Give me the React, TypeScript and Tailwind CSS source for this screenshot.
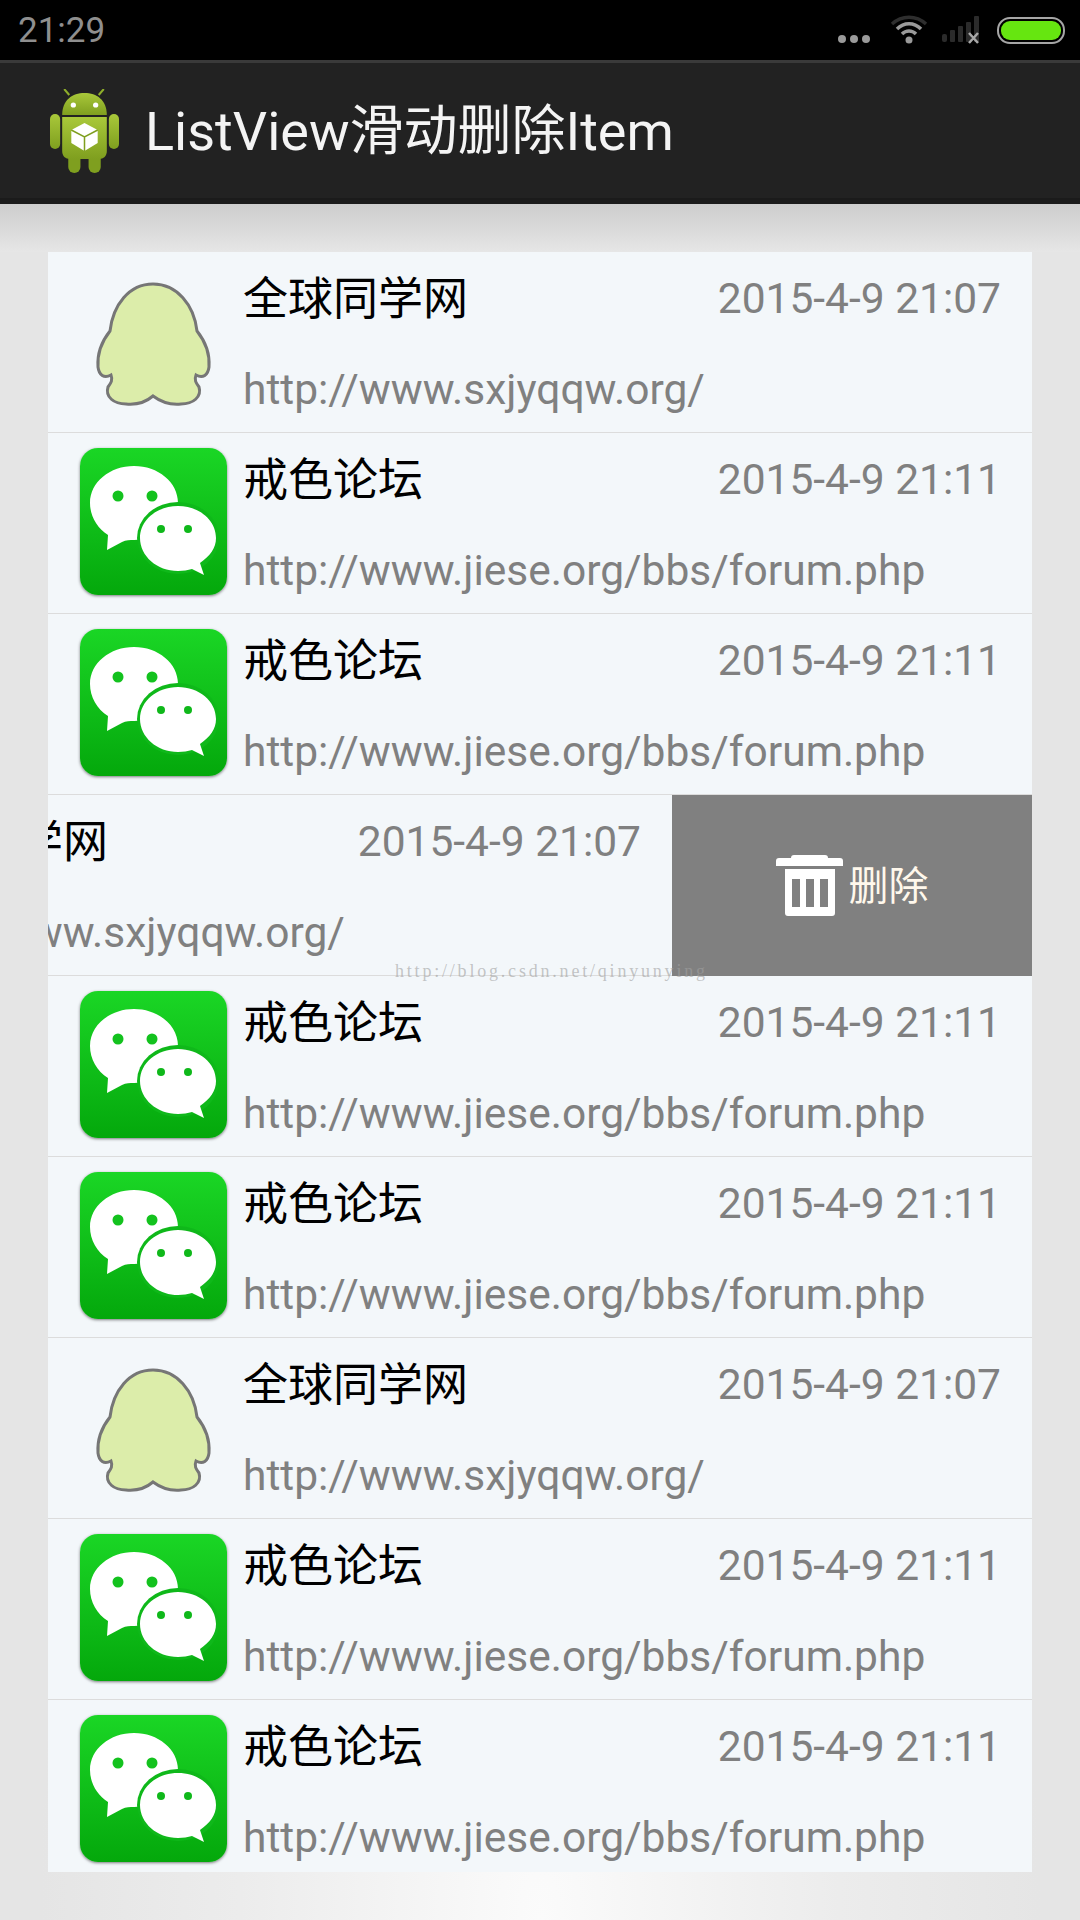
const SANS = "font-['Roboto','Noto_Sans_CJK_SC',sans-serif]";

type Item = { kind: "qq" | "wx"; title: string; date: string; url: string };

const QQ: Item = { kind: "qq", title: "全球同学网", date: "2015-4-9 21:07", url: "http://www.sxjyqqw.org/" };
const WX: Item = { kind: "wx", title: "戒色论坛", date: "2015-4-9 21:11", url: "http://www.jiese.org/bbs/forum.php" };

const items: Item[] = [QQ, WX, WX, QQ, WX, WX, QQ, WX, WX];

function StatusIcons() {
  return (
    <div className="flex items-center">
      <svg width="36" height="10" viewBox="0 0 36 10" className="mt-[18px]">
        <circle cx="4" cy="5" r="4" fill="#9a9a9a" />
        <circle cx="16" cy="5" r="4" fill="#9a9a9a" />
        <circle cx="28" cy="5" r="4" fill="#9a9a9a" />
      </svg>
      <svg width="38" height="30" viewBox="0 0 38 30" className="ml-[16px] mb-[1px]">
        <path d="M2 9 C12 0 26 0 36 9" fill="none" stroke="#2e2e2e" strokeWidth="3.5" />
        <path d="M7 14 C14 7 24 7 31 14" fill="none" stroke="#9a9a9a" strokeWidth="3.5" />
        <path d="M12 19 C16 15 22 15 26 19" fill="none" stroke="#9a9a9a" strokeWidth="3.5" />
        <circle cx="19" cy="25" r="3.5" fill="#9a9a9a" />
      </svg>
      <svg width="40" height="28" viewBox="0 0 40 28" className="ml-[14px]">
        <rect x="0" y="18" width="5" height="8" rx="2" fill="#2b2b2b" />
        <rect x="8" y="14" width="5" height="12" rx="1" fill="#2b2b2b" />
        <rect x="16" y="10" width="5" height="16" rx="1" fill="#2b2b2b" />
        <rect x="24" y="6" width="5" height="20" rx="1" fill="#2b2b2b" />
        <rect x="32" y="0" width="5" height="26" rx="1" fill="#2b2b2b" />
        <path d="M27 17 L36 27 M36 17 L27 27" stroke="#a8a8a8" strokeWidth="2.5" />
      </svg>
      <div className="ml-[15px] h-[27px] w-[68px] rounded-[13px] border-[2px] border-[#a6a6a6] bg-black p-[2px]">
        <div className="h-full w-full rounded-[9px] bg-[#66e610]" />
      </div>
    </div>
  );
}

function AndroidIcon() {
  return (
    <svg width="69" height="84" viewBox="0 0 68 84" preserveAspectRatio="none">
      <defs>
        <linearGradient id="droid" x1="0" y1="0" x2="0" y2="1">
          <stop offset="0" stopColor="#a9c83a" />
          <stop offset="1" stopColor="#7f9f1f" />
        </linearGradient>
      </defs>
      <path d="M19 6 L14 0 M48 6 L53 0" stroke="#8fae2a" strokeWidth="2" />
      <path d="M12 26 C12 11 22 4 34 4 C46 4 56 11 56 26 Z" fill="url(#droid)" />
      <circle cx="23" cy="16" r="2.6" fill="#fff" />
      <circle cx="45" cy="16" r="2.6" fill="#fff" />
      <rect x="0" y="25" width="10" height="35" rx="5" fill="url(#droid)" />
      <rect x="58" y="25" width="10" height="35" rx="5" fill="url(#droid)" />
      <rect x="18" y="62" width="12" height="22" rx="6" fill="#7f9f1f" />
      <rect x="38" y="62" width="12" height="22" rx="6" fill="#7f9f1f" />
      <path d="M12 28 L56 28 L56 62 C56 67 53 70 48 70 L20 70 C15 70 12 67 12 62 Z" fill="url(#droid)" />
      <path d="M34 34 L47 41 L47 54 L34 62 L21 54 L21 41 Z" fill="#fff" />
      <path d="M21 41 L34 48 L47 41 M34 48 L34 62" fill="none" stroke="#7f9f1f" strokeWidth="1.5" />
    </svg>
  );
}

function QQIcon() {
  return (
    <svg width="147" height="147" viewBox="-16 -16 147 147">
      <path
        d="M57 1 C33 1 17 22 14 48 C6 58 1 70 2 84 C3 92 8 96 15 92 C17 97 15 100 12 104 C9 114 18 121 30 121 C40 122 50 119 57 113 C65 119 75 122 85 121 C97 121 106 114 103 104 C100 100 98 97 100 92 C107 96 112 92 113 84 C114 70 109 58 101 48 C98 22 81 1 57 1 Z"
        fill="#dcedaa"
        stroke="#767676"
        strokeWidth="3"
      />
    </svg>
  );
}

function WeChatIcon() {
  return (
    <div className="h-[147px] w-[147px] rounded-[18px] bg-gradient-to-b from-[#1ad625] to-[#04a80b] shadow-[0_1px_3px_rgba(0,0,0,0.5)]">
      <svg width="147" height="147" viewBox="0 0 147 147">
        <path d="M54 18 C30 18 10 34 10 55 C10 68 17 80 28 87 L27 102 L42 94 C46 92 50 92 54 92 C78 92 98 75 98 55 C98 34 78 18 54 18 Z" fill="#fff" />
        <ellipse cx="98" cy="90" rx="41" ry="36" fill="#0fb81a" />
        <path d="M98 58 C77 58 60 72 60 90 C60 108 77 123 98 123 C103 123 108 122 112 121 L124 127 L120 115 C130 108 136 100 136 90 C136 72 119 58 98 58 Z" fill="#fff" />
        <circle cx="38" cy="48" r="5.5" fill="#13c21e" />
        <circle cx="72" cy="48" r="5.5" fill="#13c21e" />
        <circle cx="81" cy="81" r="4" fill="#0fb81a" />
        <circle cx="108" cy="81" r="4" fill="#0fb81a" />
      </svg>
    </div>
  );
}

function RowText({ item }: { item: Item }) {
  return (
    <div className={`flex min-w-0 flex-1 flex-col pr-[31px] ${SANS}`}>
      <div className="mt-[15px] flex h-[64px] items-center justify-between">
        <span className="text-[45px] leading-none text-black">{item.title}</span>
        <span className="text-[42.5px] leading-none text-[#808080]">{item.date}</span>
      </div>
      <div className="mt-[34px] text-[42.5px] leading-[50px] text-[#808080]">{item.url}</div>
    </div>
  );
}

function Row({ item, swiped }: { item: Item; swiped?: boolean }) {
  if (swiped) {
    return (
      <div className="h-[181px] overflow-hidden">
        <div className="ml-[-360px] flex h-[181px] w-[1344px]">
          <div className="flex w-[984px] gap-[16px] border-b border-[#dcdcdc] pl-[32px]">
            <div className="w-[147px]" />
            <RowText item={item} />
          </div>
          <div className={`flex w-[360px] items-center justify-center bg-[#808080] ${SANS}`}>
            <svg width="67" height="61" viewBox="0 0 67 61">
              <path d="M15 3 C15 1 16 0 18 0 L49 0 C51 0 52 1 52 3 L64 3 C66 3 67 4 67 6 L67 11 L0 11 L0 6 C0 4 1 3 3 3 Z" fill="#fff" />
              <path fillRule="evenodd" d="M9 14 L59 14 L59 58 C59 60 58 61 56 61 L12 61 C10 61 9 60 9 58 Z M16 24 L16 52 L24 52 L24 24 Z M30 24 L30 52 L38 52 L38 24 Z M44 24 L44 52 L52 52 L52 24 Z" fill="#fff" />
            </svg>
            <span className="ml-[6px] mt-[2px] text-[40px] leading-none text-[#fff8ec]">删除</span>
          </div>
        </div>
      </div>
    );
  }
  return (
    <div className="flex h-[181px] gap-[16px] border-b border-[#dcdcdc] pl-[32px]">
      <div className="mt-[15px] h-[147px] w-[147px] shrink-0">
        {item.kind === "qq" ? <QQIcon /> : <WeChatIcon />}
      </div>
      <RowText item={item} />
    </div>
  );
}

export default function App() {
  return (
    <div className="relative h-[1920px] w-[1080px] overflow-hidden bg-[radial-gradient(ellipse_500px_1100px_at_50%_100%,#fbfbfb_0%,#ececec_60%,#e5e5e5_100%)]">
      {/* status bar */}
      <div className={`flex h-[60px] items-center justify-between bg-black pl-[18px] pr-[15px] ${SANS}`}>
        <span className="mt-[1px] text-[35px] leading-none text-[#8f8f8f]">21:29</span>
        <StatusIcons />
      </div>

      {/* action bar */}
      <div className={`flex h-[144px] items-center border-t-[3px] border-b-[6px] border-t-[#3a3a3a] border-b-[#1b1b1b] bg-[#222222] pl-[50px] ${SANS}`}>
        <AndroidIcon />
        <span className="ml-[26px] mt-[3px] text-[54px] leading-none text-[#f4f4f4]">ListView滑动删除Item</span>
      </div>

      <div className="h-[48px] bg-gradient-to-b from-[#cdcdcd] to-[#e6e6e6]" />

      {/* list */}
      <div className="mx-[48px] h-[1620px] overflow-hidden bg-[#f3f7fa]">
        {items.map((item, i) => (
          <Row key={i} item={item} swiped={i === 3} />
        ))}
      </div>

      {/* blog watermark */}
      <div className="absolute left-[395px] top-[962px] font-['Liberation_Serif',serif] text-[18px] leading-none tracking-[2.8px] text-[#a0a0a0]/60">
        http://blog.csdn.net/qinyunying
      </div>
    </div>
  );
}
